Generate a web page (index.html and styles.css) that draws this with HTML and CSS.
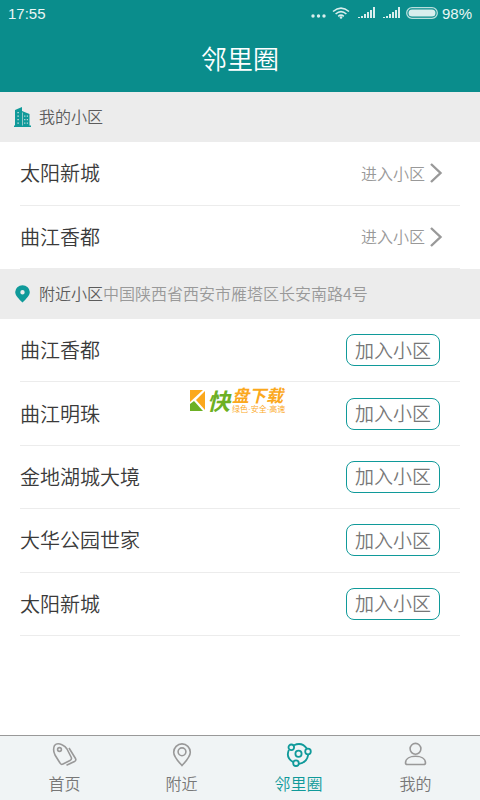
FILE: index.html
```html
<!DOCTYPE html>
<html lang="zh-CN">
<head>
<meta charset="utf-8">
<meta name="viewport" content="width=device-width, initial-scale=1">
<title>邻里圈</title>
<link rel="stylesheet" href="styles.css">
</head>
<body>
<header class="header">
  <div class="status">
    <span class="time">17:55</span>
    <svg class="dots" width="15" height="12" viewBox="0 0 15 12"><circle cx="2" cy="9" r="1.7"/><circle cx="7.500" cy="9" r="1.700"/><circle cx="13" cy="9" r="1.700"/></svg>
    <svg class="wifi" width="18" height="12" viewBox="0 0 18 12"><g fill="none" stroke="#d9eeed" stroke-width="1.600"><path d="M1 4.500Q9-2.300 17 4.500"/><path d="M3.600 7Q9 2.300 14.400 7"/><path d="M6.200 9.300Q9 7 11.800 9.300"/></g><circle cx="9" cy="10.500" r="1.300"/></svg>
    <svg class="signal" width="17" height="12" viewBox="0 0 17 12"><path d="M0 10h2v1H0zM3 9h2v2H3zM6 7h2v4H6zM9 5h2v6H9zM12 3h2v8h-2zM15 0h2v11h-2z"/></svg>
    <svg class="signal" width="17" height="12" viewBox="0 0 17 12"><path d="M0 10h2v1H0zM3 9h2v2H3zM6 7h2v4H6zM9 5h2v6H9zM12 3h2v8h-2zM15 0h2v11h-2z"/></svg>
    <svg class="battery" width="32" height="12" viewBox="0 0 32 12"><rect x=".7" y=".7" width="30.600" height="10.600" rx="5.300" fill="none" stroke="#b9dedc" stroke-width="1.300"/><rect x="2.500" y="2.500" width="27" height="7" rx="3.500"/></svg>
    <span>98%</span>
  </div>
  <h1 class="title">邻里圈</h1>
</header>

<main class="main">
  <section>
    <h2 class="section-head">
      <svg class="section-icon" width="17" height="20" viewBox="0 0 17 20"><path fill="#109a9a" fill-rule="evenodd" d="M0 18.500h1V3L8 0v4l7.500 3v11.500H17V20H0zM3.500 5h1.200v1.200H3.500zM3.500 8.500h1.200v1.200H3.500zM3.500 12h1.200v1.200H3.500zM3.500 15.500h1.200v1.200H3.500zM8 5.500h.6v13H8zM10.300 8.500h1v1.200h-1zM10.300 12h1v1.200h-1zM10.300 15.500h1v1.200h-1zM12.800 8.500h1v1.200h-1zM12.800 12h1v1.200h-1zM12.800 15.500h1v1.200h-1z"/></svg>
      <span>我的小区</span>
    </h2>
    <ul class="list list-mine">
      <li class="row"><span>太阳新城</span><a class="enter" href="#"><span>进入小区</span><svg width="14" height="20" viewBox="0 0 14 20"><path d="M2 1l9.500 9L2 19"/></svg></a></li>
      <li class="row"><span>曲江香都</span><a class="enter" href="#"><span>进入小区</span><svg width="14" height="20" viewBox="0 0 14 20"><path d="M2 1l9.500 9L2 19"/></svg></a></li>
    </ul>
  </section>

  <section class="nearby">
    <h2 class="section-head">
      <svg class="section-icon" width="17" height="18" viewBox="0 0 17 18"><path fill="#109a9a" fill-rule="evenodd" d="M8.500 17.500C5 14 1.200 10.500 1.200 7a7.300 6.700 0 0 1 14.600 0c0 3.500-3.800 7-7.300 10.500zM8.500 5a2.200 2.200 0 1 0 0 4.400 2.200 2.200 0 0 0 0-4.400z"/></svg>
      <span>附近小区</span><span class="address">中国陕西省西安市雁塔区长安南路4号</span>
    </h2>
    <ul class="list list-nearby">
      <li class="row"><span>曲江香都</span><button class="join" type="button">加入小区</button></li>
      <li class="row"><span>曲江明珠</span><button class="join" type="button">加入小区</button></li>
      <li class="row"><span>金地湖城大境</span><button class="join" type="button">加入小区</button></li>
      <li class="row"><span>大华公园世家</span><button class="join" type="button">加入小区</button></li>
      <li class="row"><span>太阳新城</span><button class="join" type="button">加入小区</button></li>
    </ul>
    <div class="watermark">
      <svg width="15" height="21" viewBox="0 0 15 21"><path fill="#fba81c" d="M0 0h13L0 12z"/><path fill="#6db024" d="M0 14l4-3 9 10H0z"/><path fill="#fba81c" d="M15 1v19L6 10z"/></svg>
      <span class="mark-first">快</span>
      <span class="mark-rest"><span class="mark-name">盘下载</span><span class="mark-note">绿色·安全·高速</span></span>
    </div>
  </section>
</main>

<nav class="tabs">
  <a class="tab" href="#"><svg width="26" height="26" viewBox="0 0 26 26"><path d="M2.500 3.500Q5 .5 10 2.800Q13.500 4.300 15 7L19.300 15.500Q20 17.500 18 18.500L11 22Q9 23 8 21L3 13Q.5 8 2.500 3.500z"/><circle cx="7.500" cy="7.500" r="1.900"/><path d="M17 6l6.500 10.500q1 2-1 3l-8 3.700"/></svg>首页</a>
  <a class="tab" href="#"><svg width="26" height="26" viewBox="0 0 26 26"><path d="M13 23.500C9 19 4.700 15 4.700 10.200a8.300 8.300 0 0 1 16.600 0C21.300 15 17 19 13 23.500z"/><circle cx="13" cy="9.800" r="3.900"/></svg>附近</a>
  <a class="tab tab-active" href="#" aria-current="page"><svg width="26" height="26" viewBox="0 0 26 26"><path d="M8 3.200Q16-.5 21 6.800M22.300 12.300Q21 20.500 13 21.800M7.500 20.200Q-.5 16 2.800 8"/><circle cx="5.300" cy="5.300" r="2.800"/><circle cx="22" cy="9.500" r="2.800"/><circle cx="10" cy="21.200" r="2.800"/><circle cx="12.500" cy="11.800" r="3.100"/></svg>邻里圈</a>
  <a class="tab" href="#"><svg width="26" height="26" viewBox="0 0 26 26"><circle cx="12.500" cy="6.800" r="5.400"/><path d="M2.500 21C2.500 16.300 7.500 14.300 12.500 14.300s10 2 10 6.700q0 1.500-2 1.500h-16q-2 0-2-1.500z"/></svg>我的</a>
</nav>
</body>
</html>
```

FILE: styles.css
```css
* {
  box-sizing: border-box;
}

body {
  display: flex;
  flex-direction: column;
  min-height: 100vh;
  margin: 0;
  background: #fff;
  color: #3a3a3a;
  font-family: "Noto Sans CJK SC", sans-serif;
  font-weight: 350;
}

a {
  color: inherit;
  text-decoration: none;
}

.header {
  height: 92px;
  background: #0a8d8c;
  color: #fff;
}

.status {
  display: flex;
  align-items: center;
  gap: 8px;
  height: 26px;
  padding: 0 8px;
  color: #eaf6f5;
  font-family: "Liberation Sans", sans-serif;
  font-size: 15px;
}

.status svg {
  fill: #d9eeed;
}

.time {
  margin-right: auto;
}

.dots {
  margin-right: -2px;
}

.battery {
  margin-right: -4px;
  margin-left: -2px;
}

.title {
  margin: 0;
  font-size: 26px;
  font-weight: 350;
  line-height: 64px;
  text-align: center;
}

.main {
  flex: 1;
}

.nearby {
  position: relative;
}

.section-head {
  display: flex;
  align-items: center;
  height: 50px;
  margin: 0;
  padding: 0 14px;
  background: #ececec;
  color: #5c5c5c;
  font-size: 16px;
  font-weight: 350;
}

.section-head span {
  padding-bottom: 2px;
}

.row span {
  padding-bottom: 1px;
}

.section-icon {
  margin-right: 8px;
}

.section-head .address {
  color: #999;
}

.list {
  display: grid;
  grid-auto-rows: 1fr;
  margin: 0;
  padding: 0 20px;
  list-style: none;
}

.list-mine {
  min-height: 127px;
}

.list-nearby {
  min-height: 317px;
}

.row {
  display: flex;
  align-items: center;
  justify-content: space-between;
  border-bottom: 1px solid #ececec;
  font-size: 20px;
}

.enter {
  display: flex;
  align-items: center;
  gap: 4px;
  margin-right: 17px;
  color: #999;
  font-size: 16px;
}

.enter path {
  fill: none;
  stroke: #999;
  stroke-width: 2.4;
}

.join {
  width: 94px;
  height: 32px;
  margin-right: 20px;
  padding: 0 0 1px;
  border: 1px solid #109a9a;
  border-radius: 8px;
  background: #fff;
  color: #777;
  font-family: inherit;
  font-size: 19px;
  font-weight: 350;
  line-height: 28px;
}

.watermark {
  position: absolute;
  top: 117px;
  left: 50%;
  display: flex;
  align-items: center;
  gap: 2px;
  width: 100px;
  margin-left: -50px;
  color: #fba81c;
}

.mark-first {
  color: #6db024;
  font-size: 23px;
  font-style: italic;
  font-weight: 700;
  line-height: 24px;
}

.mark-rest {
  display: flex;
  flex-direction: column;
  gap: 3px;
}

.mark-name {
  font-size: 17px;
  font-style: italic;
  font-weight: 700;
  line-height: 17px;
}

.mark-note {
  font-family: "Liberation Sans", "Noto Sans CJK SC", sans-serif;
  font-size: 8px;
  line-height: 8px;
  white-space: nowrap;
}

.tabs {
  display: flex;
  height: 65px;
  padding: 0 6px;
  border-top: 1px solid #999;
  background: #f0f4f5;
  color: #777;
  font-size: 16px;
}

.tab {
  display: flex;
  flex: 1;
  flex-direction: column;
  align-items: center;
  padding-top: 6px;
  line-height: 30px;
}

.tab svg {
  fill: none;
  stroke: #999;
  stroke-width: 1.6;
}

.tab-active {
  color: #109a9a;
}

.tab-active svg {
  stroke: #109a9a;
  stroke-width: 1.8;
}
```
